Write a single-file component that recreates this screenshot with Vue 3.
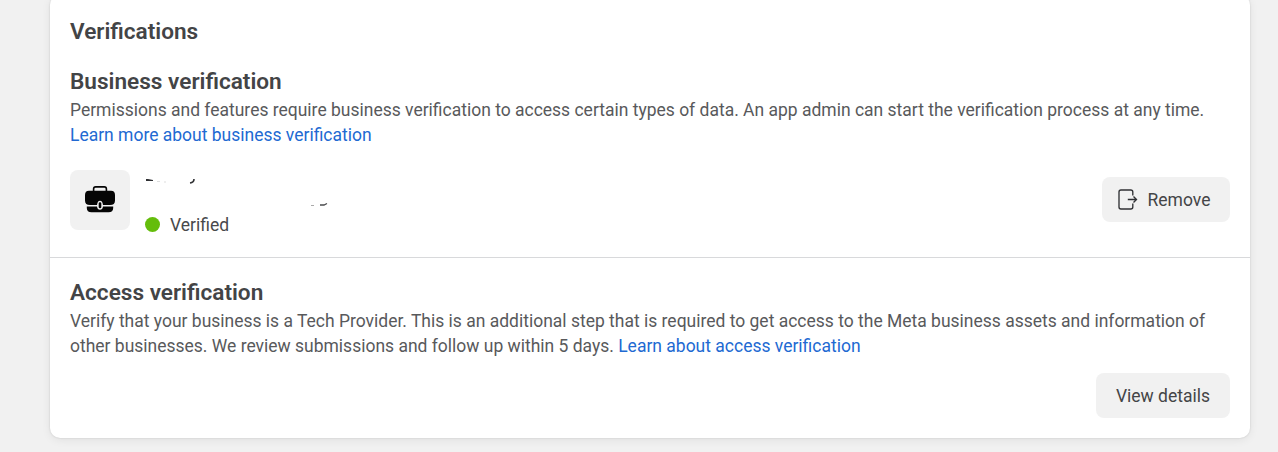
<script setup>
</script>

<template>
  <main class="page">
    <section class="card">
      <div class="block business">
        <h2 class="title">Verifications</h2>
        <h3 class="heading">Business verification</h3>
        <p class="copy">Permissions and features require business verification to access certain types of data. An app admin can start the verification process at any time. <a class="link">Learn more about business verification</a></p>
        <div class="row">
          <div class="tile">
            <svg width="30" height="27" viewBox="0 0 30 27">
              <path d="M8.600 6V3Q8.600 .9 10.700 .9H19.300Q21.400 .9 21.400 3V6" fill="none" stroke="#050505" stroke-width="1.600" />
              <path d="M4 4.700H26Q30 4.700 30 9V14.500Q30 19 25 19H18Q17.500 14.700 15 14.700T12 19H5Q0 19 0 14.500V9Q0 4.700 4 4.700Z" fill="#050505" />
              <path d="M1.800 20.500H12Q12.500 23.700 15 23.700T18 20.500H28.200V22Q28.200 26.200 23.500 26.200H6.500Q1.800 26.200 1.800 22Z" fill="#050505" />
              <rect x="13.700" y="16.200" width="2.600" height="6" rx="1.300" fill="#050505" />
            </svg>
          </div>
          <div class="details">
            <svg class="traces" width="200" height="34" viewBox="0 0 200 34" fill="none">
              <path d="M1 1V3H8V2L3 1Z" fill="#303134" />
              <path d="M12 3.500H15M19 4H21" stroke="#ddd" stroke-width="1" />
              <path d="M49 1Q49 4.500 45 5" stroke="#303134" stroke-width="1.600" />
              <path d="M166 27.500H169" stroke="#aaa" stroke-width="1" />
              <path d="M175 27H179L182 25.500" stroke="#4a4b4d" stroke-width="1.300" />
            </svg>
            <div class="status"><span class="dot"></span><span class="status-text">Verified</span></div>
          </div>
          <button class="button remove">
            <svg width="20" height="21" viewBox="0 0 20 21" fill="none" stroke="#303134" stroke-width="1.350">
              <path d="M14.800 6.500V3Q14.800 1 12.800 1H3Q1 1 1 3V18Q1 20 3 20H12.800Q14.800 20 14.800 18V14.500" />
              <path d="M9.800 10.500H18.500M15.500 7.500L18.500 10.500L15.500 13.500" />
            </svg>
            Remove
          </button>
        </div>
      </div>
      <div class="block access">
        <h3 class="heading">Access verification</h3>
        <p class="copy">Verify that your business is a Tech Provider. This is an additional step that is required to get access to the Meta business assets and information of other businesses. We review submissions and follow up within 5 days. <a class="link">Learn about access verification</a></p>
        <div class="actions"><button class="button">View details</button></div>
      </div>
    </section>
  </main>
</template>

<style>
body { background: #f1f1f1; overflow: hidden; }
</style>

<style scoped>
.page {
  box-sizing: border-box;
  height: 452px;
  padding: 0 28px 14px 50px;
  overflow: hidden;
  font-family: Roboto, "Liberation Sans", sans-serif;
  font-size: 17.5px;
  line-height: 25px;
  color: #48494b;
}
.card {
  box-sizing: border-box;
  height: 443px;
  margin-top: -5px;
  background: #fff;
  border-radius: 10px;
  box-shadow: 0 0 2px rgba(0, 0, 0, .15), 0 2px 10px rgba(0, 0, 0, .07);
}
.block { box-sizing: border-box; padding: 0 20px; }
.business { height: 263px; padding-top: 24px; border-bottom: 1px solid #d8d9db; }
.access { padding-top: 22px; }
.title, .heading { margin: 0; font-size: 22.6px; font-weight: 600; line-height: 25px; color: #434446; }
.title { margin-bottom: 25px; }
.copy { margin: 4px 0 0; font-size: 17.49px; color: #58595b; }
.link { color: #2169d2; }
.row { display: flex; align-items: flex-start; margin-top: 22px; }
.tile { display: flex; width: 60px; height: 60px; box-sizing: border-box; align-items: center; justify-content: center; padding-bottom: 2px; border-radius: 8px; background: #f1f1f1; }
.details { display: flex; flex-direction: column; margin-left: 15px; padding-top: 8px; }
.traces { display: block; }
.status { display: flex; height: 25px; align-items: center; gap: 10px; }
.status-text { margin-top: 2px; }
.dot { width: 15px; height: 15px; border-radius: 50%; background: #64bd0b; }
.button { box-sizing: border-box; height: 45px; margin: 0; padding: 2px 20px 0; border: 0; border-radius: 8px; background: #f1f1f1; color: #444547; font: inherit; }
.remove { display: flex; align-items: center; gap: 9.5px; width: 128px; margin-top: 7px; margin-left: auto; padding-right: 0; padding-left: 16px; }
.remove svg { flex: none; margin-top: -2px; }
.actions { display: flex; justify-content: flex-end; margin-top: 14px; }
.actions .button { width: 134px; padding-right: 0; padding-left: 0; }
</style>
